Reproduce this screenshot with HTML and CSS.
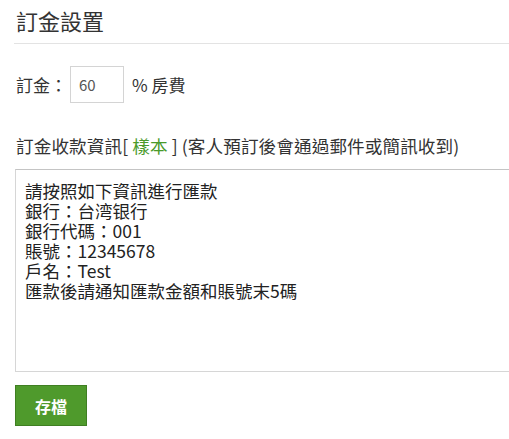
FILE: index.html
```html
<!DOCTYPE html>
<html>
<head>
  <meta charset="utf-8">
  <title>訂金設置</title>
  <link rel="stylesheet" href="styles.css">
</head>
<body>
  <div class="panel">
    <h2 class="panel-title">訂金設置</h2>
    <div class="divider"></div>

    <div class="deposit-row">
      <label for="deposit">訂金：</label>
      <input type="text" id="deposit" value="60">
      <span>% 房費</span>
    </div>

    <div class="info-label">
      訂金收款資訊[ <a href="#" class="sample-link">樣本</a> ] (客人預訂後會通過郵件或簡訊收到)
    </div>

    <textarea class="info-text">請按照如下資訊進行匯款
銀行：台湾银行
銀行代碼：001
賬號：12345678
戶名：Test
匯款後請通知匯款金額和賬號末5碼</textarea>

    <button class="save-btn">存檔</button>
  </div>
</body>
</html>
```

FILE: styles.css
```css
body {
  margin: 0;
  padding: 0;
  background: #fff;
  color: #333;
  font-family: "Noto Sans CJK TC", "Noto Sans", sans-serif;
  overflow: hidden;
}

.panel {
  padding: 5px 0 0 15px;
}

.panel-title {
  margin: 0 0 0 1px;
  font-size: 22px;
  font-weight: normal;
  line-height: 30px;
  color: #333;
}

.divider {
  margin-top: 8px;
  margin-left: -1px;
  border-top: 1px solid #e3e3e3;
}

.deposit-row {
  display: flex;
  align-items: center;
  margin-top: 22px;
  margin-left: 1px;
  font-size: 17px;
}

.deposit-row label {
  margin-right: 3px;
}

.deposit-row input {
  width: 54px;
  height: 37px;
  box-sizing: border-box;
  padding: 0 8px;
  border: 1px solid #d4d4d4;
  font-family: inherit;
  font-size: 15px;
  color: #555;
  margin-right: 8px;
}

.info-label {
  margin-top: 32px;
  margin-left: 1px;
  font-size: 17.6px;
  line-height: 22px;
  letter-spacing: 0.1px;
}

.sample-link {
  color: #4a9a2a;
  text-decoration: none;
}

.info-text {
  display: block;
  margin-top: 12px;
  width: 100%;
  height: 203px;
  box-sizing: border-box;
  padding: 11px 9px;
  border: 1px solid #d6d6d6;
  border-top-color: #c4c4c4;
  border-right: none;
  font-family: inherit;
  font-size: 17.5px;
  line-height: 20px;
  color: #222;
  resize: none;
}

.save-btn {
  display: block;
  margin-top: 13px;
  height: 41px;
  padding: 0 19px;
  background-color: #4f9a2c;
  border: 1px solid #3f7f22;
  color: #fff;
  font-family: inherit;
  font-size: 16px;
  font-weight: bold;
  cursor: pointer;
}
```
